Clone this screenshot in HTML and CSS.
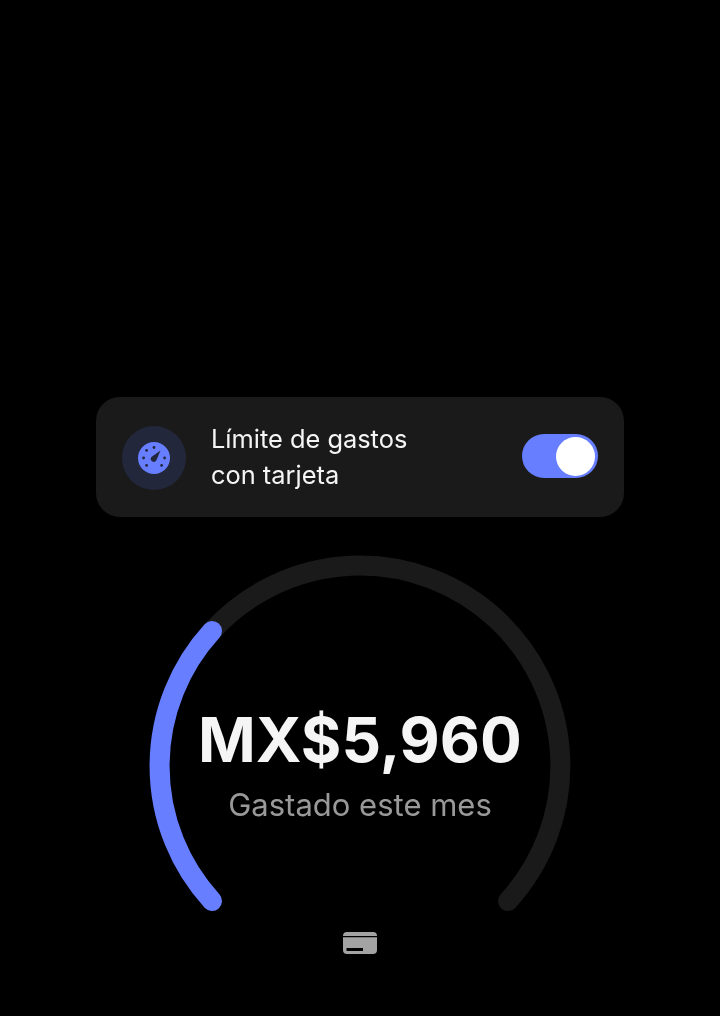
FILE: index.html
```html
<!DOCTYPE html>
<html lang="es">
<head>
    <meta charset="UTF-8">
    <meta name="viewport" content="width=device-width, initial-scale=1.0">
    <title>Límite de gastos</title>
    <link rel="stylesheet" href="styles.css">
</head>
<body>
    <div class="limit-card">
        <div class="limit-icon">
            <svg width="32" height="32" viewBox="0 0 32 32">
                <circle cx="16" cy="16" r="16" fill="#667eff"/>
                <g fill="#23273b">
                    <circle cx="16" cy="5.5" r="1.4"/>
                    <circle cx="8.6" cy="8.4" r="1.4"/>
                    <circle cx="5.6" cy="16" r="1.4"/>
                    <circle cx="8.6" cy="23.4" r="1.4"/>
                    <circle cx="26.6" cy="16" r="1.4"/>
                    <circle cx="23.6" cy="23.4" r="1.4"/>
                    <path d="M22.5 8.5 L18.3 18.5 A3 3 0 0 1 13.4 14.9 Z"/>
                </g>
            </svg>
        </div>
        <div class="limit-label">Límite de gastos<br>con tarjeta</div>
        <div class="toggle"><div class="toggle-knob"></div></div>
    </div>

    <div class="gauge">
        <svg class="gauge-arc" width="440" height="375" viewBox="0 0 440 375">
            <path d="M72 85 A200 200 0 1 1 368 355" fill="none" stroke="#1a1a1a" stroke-width="20" stroke-linecap="round"/>
            <path d="M72 85 A200 200 0 0 0 72 355" fill="none" stroke="#667eff" stroke-width="20" stroke-linecap="round"/>
        </svg>
        <div class="gauge-text">
            <div class="amount">MX$5,960</div>
            <div class="amount-label">Gastado este mes</div>
        </div>
    </div>

    <svg class="card-icon" width="34" height="22" viewBox="0 0 34 22">
        <path d="M0 4 A4 4 0 0 1 4 0 H30 A4 4 0 0 1 34 4 H0 Z" fill="#a3a3a3"/>
        <path d="M0 5.3 H34 V18 A4 4 0 0 1 30 22 H4 A4 4 0 0 1 0 18 Z M3.5 16 V19 H20 V16 Z" fill="#a3a3a3" fill-rule="evenodd"/>
    </svg>
</body>
</html>
```

FILE: styles.css
```css
body {
    font-family: Inter, "Liberation Sans", sans-serif;
    display: flex;
    flex-direction: column;
    align-items: center;
    height: 1016px;
    margin: 0;
    padding-top: 397px;
    box-sizing: border-box;
    overflow: hidden;
    background-color: #000;
}
.limit-card {
    display: flex;
    align-items: center;
    width: 528px;
    height: 120px;
    padding: 0 26px;
    box-sizing: border-box;
    background-color: #1a1a1a;
    border-radius: 24px;
}
.limit-icon {
    display: flex;
    justify-content: center;
    align-items: center;
    width: 64px;
    height: 64px;
    margin-top: 2px;
    border-radius: 50%;
    background-color: #23273b;
}
.limit-label {
    flex: 1;
    margin-left: 25px;
    font-size: 25.4px;
    line-height: 36px;
    color: #f5f5f5;
    will-change: transform;
}
.toggle {
    display: flex;
    justify-content: flex-end;
    align-items: center;
    width: 76px;
    height: 44px;
    margin-bottom: 2px;
    padding: 0 3px;
    box-sizing: border-box;
    border-radius: 22px;
    background-color: #667eff;
}
.toggle-knob {
    width: 39px;
    height: 39px;
    border-radius: 50%;
    background-color: #fff;
}
.gauge {
    position: relative;
    width: 440px;
    height: 375px;
    margin-top: 29px;
}
.gauge-arc {
    display: block;
}
.gauge-text {
    position: absolute;
    left: 0;
    right: 0;
    top: 154px;
    text-align: center;
    will-change: transform;
}
.amount {
    font-size: 62px;
    line-height: 80px;
    font-weight: 700;
    color: #f5f5f5;
}
.amount-label {
    font-size: 31px;
    line-height: 40px;
    color: #999;
    margin-top: 5px;
}
.card-icon {
    display: block;
    margin-top: 11px;
}
```
